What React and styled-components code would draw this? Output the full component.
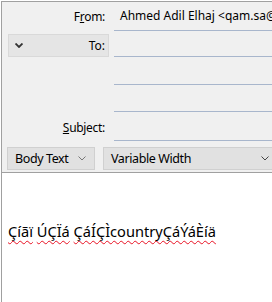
import styled, { createGlobalStyle } from "styled-components";

const Global = createGlobalStyle`
  html, body { margin: 0; padding: 0; background: #fff; }
  body { font-family: "Noto Sans", "Open Sans", sans-serif; }
  #root { width: 272px; height: 302px; overflow: hidden; }
`;

const Frame = styled.div`
  margin: 1px 0 0 1px;
  height: 301px;
  border-left: 1px solid #a0a0a0;
  background: #fff;
  display: flex;
  flex-direction: column;
`;

const Header = styled.div`
  background: #f0f0f0;
  border-top: 1px solid #a0a0a0;
  border-bottom: 1px solid #a0a0a0;
  height: 170px;
  flex-shrink: 0;
  display: flex;
  flex-direction: column;
`;

const Row = styled.div`
  display: grid;
  grid-template-columns: 107px 1fr;
  column-gap: 5px;
  height: ${(p) => p.h}px;
  align-items: stretch;
`;

const Label = styled.div`
  font-size: 12px;
  letter-spacing: -0.3px;
  color: #000;
  padding-right: 4px;
  display: flex;
  align-items: flex-end;
  justify-content: flex-end;
  padding-bottom: ${(p) => p.pb ?? 6}px;
  u { text-decoration: underline; text-underline-offset: 1px; }
`;

const ToButton = styled.div`
  margin: 3px 0 0 6px;
  background: #e5e5e5;
  border: 1px solid #d9d9d9;
  display: flex;
  align-items: center;
  justify-content: space-between;
  padding: 0 3px 0 6px;
  font-size: 12px;
`;

const Field = styled.div`
  border-bottom: 1px solid #a8b6cc;
  font-size: 12px;
  display: flex;
  align-items: flex-end;
  padding: 0 0 6px 6px;
  white-space: nowrap;
  overflow: hidden;
`;

const Toolbar = styled.div`
  display: flex;
  gap: 8px;
  padding: 6px 0 0 5px;
`;

const Select = styled.div`
  width: ${(p) => p.w}px;
  height: 23px;
  flex-shrink: 0;
  background: #e1e1e1;
  border: 1px solid #d0d0d0;
  display: flex;
  align-items: center;
  justify-content: space-between;
  padding: 0 8px 0 7px;
  box-sizing: border-box;
  font-size: 12.5px;
  letter-spacing: -0.4px;
  color: #000;
`;

const Body = styled.div`
  padding: 48px 0 0 6px;
  font-size: 14.6px;
  color: #000;
  white-space: nowrap;
`;

const Misspelled = styled.span`
  text-decoration: underline wavy #e81123;
  text-decoration-thickness: 1px;
  text-underline-offset: 3px;
  text-decoration-skip-ink: none;
`;

const Chevron = ({ color = "#555", w = 1 }) => (
  <svg width="8" height="5" viewBox="0 0 8 5">
    <path d="M0.5 0.5 L4 4 L7.5 0.5" fill="none" stroke={color} strokeWidth={w} />
  </svg>
);

export default function App() {
  return (
    <>
      <Global />
      <Frame>
        <Header>
          <Row h={29}>
            <Label pb={6}>
              <span>F<u>r</u>om:</span>
            </Label>
            <Field>Ahmed Adil Elhaj &lt;qam.sa@</Field>
          </Row>
          <Row h={26}>
            <ToButton>
              <Chevron color="#333" w={1.8} />
              <span>To:</span>
            </ToButton>
            <Field />
          </Row>
          <Row h={28}>
            <div />
            <Field />
          </Row>
          <Row h={27}>
            <div />
            <Field />
          </Row>
          <Row h={29}>
            <Label pb={5}>
              <span><u>S</u>ubject:</span>
            </Label>
            <Field />
          </Row>
          <Toolbar>
            <Select w={88}>
              <span>Body Text</span>
              <Chevron color="#777" />
            </Select>
            <Select w={175}>
              <span>Variable Width</span>
              <Chevron color="#444" />
            </Select>
          </Toolbar>
        </Header>
        <Body>
          <Misspelled>Çíãï</Misspelled> <Misspelled>ÚÇÏá</Misspelled>{" "}
          <Misspelled>ÇáÍÇÌcountryÇáÝáÈíä</Misspelled>
        </Body>
      </Frame>
    </>
  );
}
